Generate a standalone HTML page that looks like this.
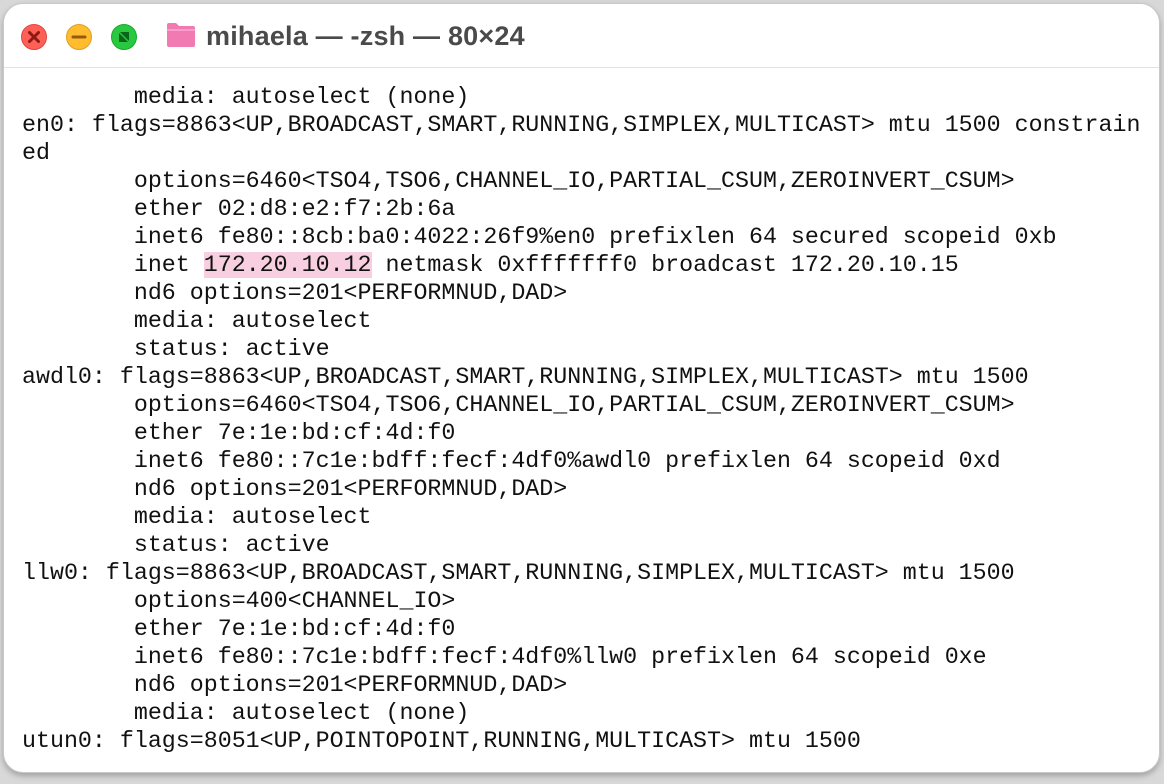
<!DOCTYPE html>
<html><head><style>
html,body{margin:0;padding:0;width:1164px;height:784px;background:#d8d8d8;overflow:hidden}
.win{position:absolute;left:3px;top:3px;width:1157px;height:770px;background:#fff;border-radius:20px;border:1px solid #c8c8c8;box-sizing:border-box;overflow:hidden;box-shadow:0 3px 6px rgba(0,0,0,.25)}
.tb{position:absolute;left:0;top:0;right:0;height:63px;border-bottom:1px solid #e2e2e2;background:#fff}
.dot{position:absolute;top:20px;width:26px;height:26px;border-radius:50%}
.title{position:absolute;left:202px;top:14px;font:bold 27px "Liberation Sans",sans-serif;color:#4a4a4a;line-height:36px;letter-spacing:0.2px}
pre{position:absolute;left:18px;top:79px;margin:0;font:23.3px/28px "Liberation Mono",monospace;color:#111}
.hl{background:#f8cfe0}
</style></head><body>
<div class="win">
<div class="tb">
<div class="dot" style="left:17px;background:#fe5f57;border:1px solid #e14640;box-sizing:border-box"></div>
<svg style="position:absolute;left:17px;top:20px" width="26" height="26"><path d="M8.5 8.5L17.5 17.5M17.5 8.5L8.5 17.5" stroke="#8c1a12" stroke-width="3" stroke-linecap="round"/></svg>
<div class="dot" style="left:62px;background:#febc2e;border:1px solid #dea123;box-sizing:border-box"></div>
<svg style="position:absolute;left:62px;top:20px" width="26" height="26"><path d="M7 13H19" stroke="#985712" stroke-width="3" stroke-linecap="round"/></svg>
<div class="dot" style="left:107px;background:#28c840;border:1px solid #1aab29;box-sizing:border-box"></div>
<svg style="position:absolute;left:107px;top:20px" width="26" height="26"><path d="M8 9V18H17Z M18 17V8H9Z" fill="#0a6518"/></svg>
<svg style="position:absolute;left:162px;top:18px" width="30" height="26"><path d="M1 3Q1 1 3 1H10L13 4H27Q29 4 29 6V23Q29 25 27 25H3Q1 25 1 23Z" fill="#f27ab2"/><path d="M1 8H29" stroke="#f9a9cf" stroke-width="1.5"/></svg>
<div class="title">mihaela — -zsh — 80×24</div>
</div>
<pre>        media: autoselect (none)
en0: flags=8863&lt;UP,BROADCAST,SMART,RUNNING,SIMPLEX,MULTICAST&gt; mtu 1500 constrain
ed
        options=6460&lt;TSO4,TSO6,CHANNEL_IO,PARTIAL_CSUM,ZEROINVERT_CSUM&gt;
        ether 02:d8:e2:f7:2b:6a
        inet6 fe80::8cb:ba0:4022:26f9%en0 prefixlen 64 secured scopeid 0xb
        inet <span class="hl">172.20.10.12</span> netmask 0xfffffff0 broadcast 172.20.10.15
        nd6 options=201&lt;PERFORMNUD,DAD&gt;
        media: autoselect
        status: active
awdl0: flags=8863&lt;UP,BROADCAST,SMART,RUNNING,SIMPLEX,MULTICAST&gt; mtu 1500
        options=6460&lt;TSO4,TSO6,CHANNEL_IO,PARTIAL_CSUM,ZEROINVERT_CSUM&gt;
        ether 7e:1e:bd:cf:4d:f0
        inet6 fe80::7c1e:bdff:fecf:4df0%awdl0 prefixlen 64 scopeid 0xd
        nd6 options=201&lt;PERFORMNUD,DAD&gt;
        media: autoselect
        status: active
llw0: flags=8863&lt;UP,BROADCAST,SMART,RUNNING,SIMPLEX,MULTICAST&gt; mtu 1500
        options=400&lt;CHANNEL_IO&gt;
        ether 7e:1e:bd:cf:4d:f0
        inet6 fe80::7c1e:bdff:fecf:4df0%llw0 prefixlen 64 scopeid 0xe
        nd6 options=201&lt;PERFORMNUD,DAD&gt;
        media: autoselect (none)
utun0: flags=8051&lt;UP,POINTOPOINT,RUNNING,MULTICAST&gt; mtu 1500</pre>
</div>
</body></html>
